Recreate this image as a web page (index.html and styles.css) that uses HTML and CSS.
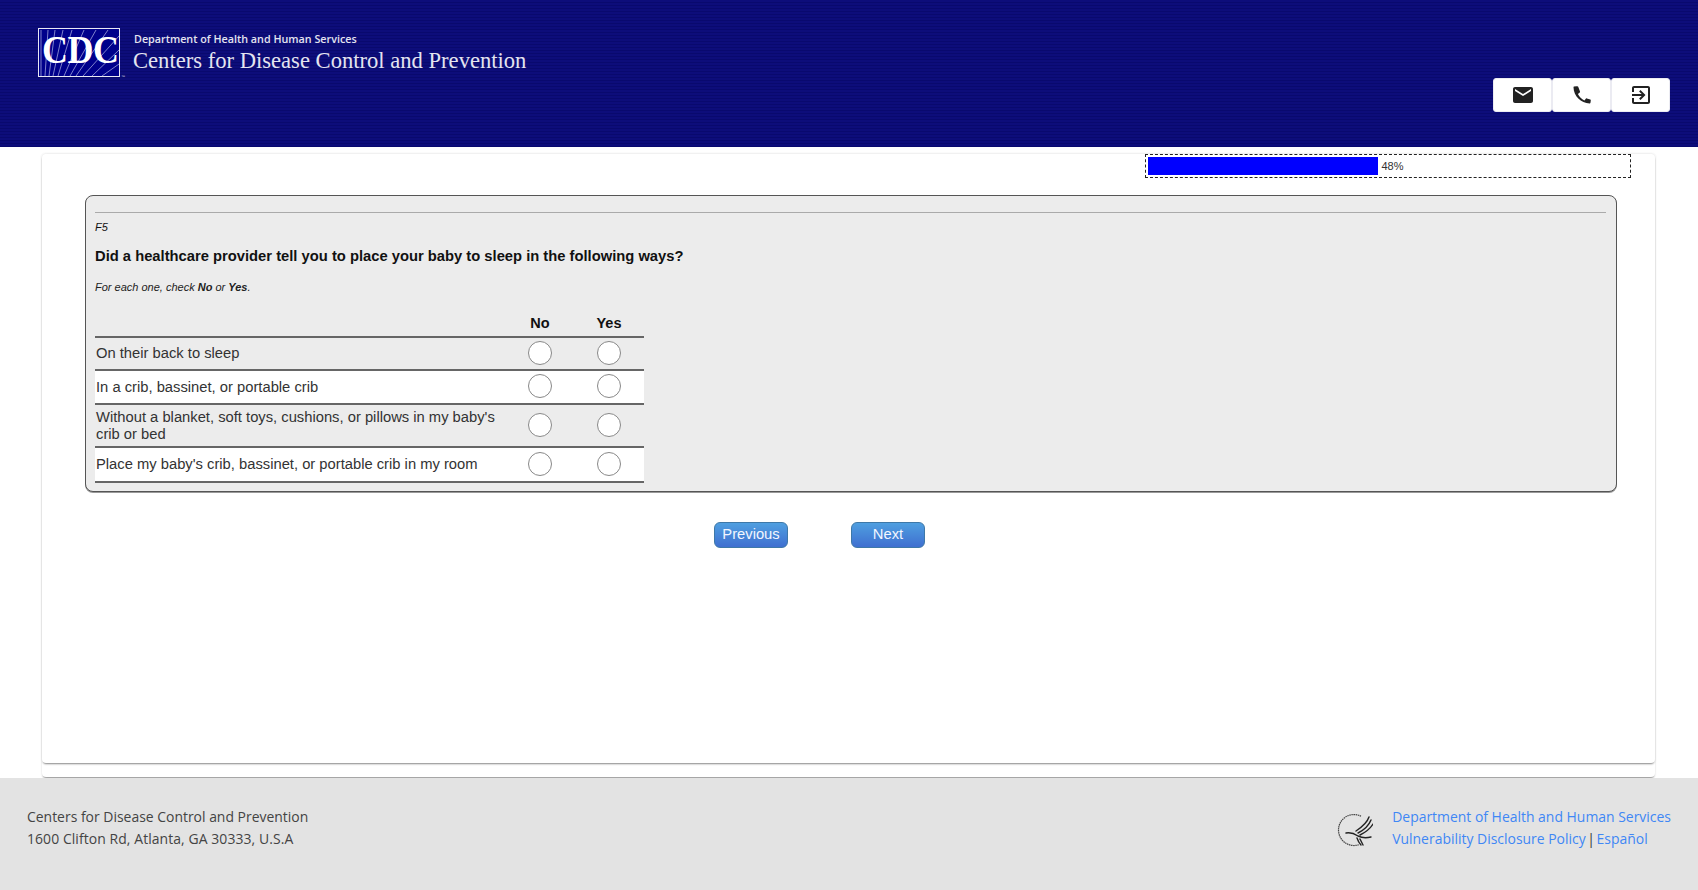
FILE: index.html
```html
<!DOCTYPE html>
<html lang="en">
<head>
<meta charset="utf-8">
<title>CDC Survey</title>
<link rel="stylesheet" href="styles.css">
</head>
<body>
<header class="site-header">
  <div class="brand">
    <svg class="logo" viewBox="0 0 88 54" width="88" height="54" aria-hidden="true">
      <rect x="0.5" y="0.5" width="81" height="48" fill="#00008b" stroke="#e8e8f4"/>
      <g stroke="#b4b8e6" stroke-width="0.7" fill="none">
        <path d="M3 48L3 2M7 48L10 2M11 48L17 2M15 48L25 2M20 48L34 2M26 48L46 2M32 48L58 2M38 48L70 2M45 48L81 8M54 48L81 22M64 48L81 36"/>
      </g>
      <text class="logo-text" transform="translate(4 35) scale(1 1.140)">CDC</text>
      <text class="logo-tm" x="83" y="50">™</text>
    </svg>
    <div class="brand-text">
      <div class="brand-dept">Department of Health and Human Services</div>
      <div class="brand-name">Centers for Disease Control and Prevention</div>
    </div>
  </div>
  <div class="header-actions">
    <button class="icon-btn" type="button" aria-label="Email">
      <svg viewBox="0 0 24 24" width="24" height="24"><path fill="#222" d="M20 4H4c-1.100 0-2 .9-2 2v12c0 1.100.9 2 2 2h16c1.100 0 2-.9 2-2V6c0-1.100-.9-2-2-2zm0 4-8 5-8-5V6l8 5 8-5v2z"/></svg>
    </button>
    <button class="icon-btn" type="button" aria-label="Phone">
      <svg viewBox="0 0 24 24" width="24" height="24"><path fill="#222" d="M6.600 3.200 4 3.600C3.700 3.700 3.500 4 3.500 4.300c.2 8.900 7.300 16 16.200 16.200.3 0 .6-.2.7-.5l.4-2.600c0-.4-.2-.7-.5-.8l-3.500-1.200c-.3-.1-.6 0-.8.2l-1.600 1.900c-2.800-1.400-5.100-3.700-6.500-6.500l1.900-1.600c.2-.2.3-.5.2-.8L8.200 3.700c-.2-.3-.5-.5-.8-.5z"/></svg>
    </button>
    <button class="icon-btn" type="button" aria-label="Log out">
      <svg viewBox="0 0 24 24" width="24" height="24"><path fill="#222" d="M5 3c-1.100 0-2 .9-2 2v4h2V5h14v14H5v-4H3v4c0 1.100.9 2 2 2h14c1.100 0 2-.9 2-2V5c0-1.100-.9-2-2-2H5zm5.100 12.600 1.400 1.400 5-5-5-5-1.400 1.400 2.600 2.600H3v2h9.700l-2.600 2.600z"/></svg>
    </button>
  </div>
</header>

<main class="page">
  <div class="card-back">
    <section class="card">
      <div class="progress-row">
        <div class="progress">
          <div class="progress-fill" style="width:48%"></div>
          <span class="progress-label">48%</span>
        </div>
      </div>
      <div class="panel">
        <hr class="panel-rule">
        <p class="qid">F5</p>
        <h1 class="question">Did a healthcare provider tell you to place your baby to sleep in the following ways?</h1>
        <p class="hint">For each one, check <b>No</b> or <b>Yes</b>.</p>
        <table class="grid">
          <thead>
            <tr><th class="col-label"></th><th class="col-no">No</th><th class="col-yes">Yes</th></tr>
          </thead>
          <tbody>
            <tr class="r1"><td>On their back to sleep</td><td><span class="radio"></span></td><td><span class="radio"></span></td></tr>
            <tr class="r2 alt"><td>In a crib, bassinet, or portable crib</td><td><span class="radio"></span></td><td><span class="radio"></span></td></tr>
            <tr class="r3"><td>Without a blanket, soft toys, cushions, or pillows in my baby's crib or bed</td><td><span class="radio"></span></td><td><span class="radio"></span></td></tr>
            <tr class="r4 alt"><td>Place my baby's crib, bassinet, or portable crib in my room</td><td><span class="radio"></span></td><td><span class="radio"></span></td></tr>
          </tbody>
        </table>
      </div>
      <div class="nav-buttons">
        <button class="nav-btn" type="button">Previous</button>
        <button class="nav-btn" type="button">Next</button>
      </div>
    </section>
  </div>
</main>

<footer class="site-footer">
  <div class="foot-left">
    <div>Centers for Disease Control and Prevention</div>
    <div class="foot-address">1600 Clifton Rd, Atlanta, GA 30333, U.S.A</div>
  </div>
  <div class="foot-right">
    <svg class="seal" viewBox="0 0 36 36" width="36" height="36" aria-hidden="true">
      <path d="M24 4.200A15.500 15.500 0 1 0 22 32.700" fill="none" stroke="#444" stroke-width="1.200" stroke-dasharray="1.500 0.600"/>
      <g fill="none" stroke="#222" stroke-width="1.400" stroke-linecap="round">
        <path d="M32 5C30 11 25 15 19 19"/>
        <path d="M34 8C32 13 27 18 21 21"/>
        <path d="M36 12C33 17 29 20 23 23"/>
        <path d="M9 21C14 20 18 22 21 24C25 26 30 26 34 25"/>
        <path d="M20 26C21 29 22 31 24 33"/>
        <path d="M23 27L26 33"/>
      </g>
    </svg>
    <div class="foot-links">
      <div><a href="#">Department of Health and Human Services</a></div>
      <div><a href="#">Vulnerability Disclosure Policy</a><span class="sep"> | </span><a href="#">Español</a></div>
    </div>
  </div>
</footer>
</body>
</html>
```
FILE: styles.css
```css
* { box-sizing: border-box; }
html, body { margin: 0; height: 100%; }
body {
  display: flex;
  flex-direction: column;
  height: 890px;
  overflow: hidden;
  background: #fff;
  font-family: "Liberation Sans", Arial, sans-serif;
  color: #222;
}

.site-header {
  flex: 0 0 147px;
  display: flex;
  justify-content: space-between;
  align-items: flex-start;
  padding: 28px 28px 0 38px;
  background: repeating-linear-gradient(to bottom, #0d0d7a 0, #0d0d7a 2px, #09096e 2px, #09096e 3px);
}
.brand { display: flex; align-items: flex-start; }
.logo { flex: none; display: block; }
.logo-text { font-family: "Liberation Serif", serif; font-weight: 700; font-size: 36px; fill: #fff; letter-spacing: -0.500px; }
.logo-tm { font-size: 4px; fill: #ccd; }
.brand-text { margin-left: 7px; color: #e4e4f0; padding-top: 3px; }
.brand-dept { font-family: "Open Sans", sans-serif; font-size: 10.750px; font-weight: 600; line-height: 17px; padding-left: 1px; }
.brand-name { font-family: "Liberation Serif", serif; font-size: 22.600px; line-height: 26px; }

.header-actions { display: flex; margin-top: 50px; }
.icon-btn {
  width: 59px; height: 34px;
  padding: 0;
  display: flex; align-items: center; justify-content: center;
  background: #fff;
  border: 1px solid #ebebf2;
  border-radius: 3px;
}

.page { flex: 1 1 auto; padding: 7px 43px 0 42px; }
.card-back {
  height: 623px;
  background: #fff;
  border-radius: 4px;
  box-shadow: 0 2px 2px -1px rgba(0,0,0,.45), 0 0 3px rgba(0,0,0,.08);
}
.card {
  height: 609px;
  padding: 0 38px 0 43px;
  border-radius: 4px;
  box-shadow: 0 2px 2px -1px rgba(0,0,0,.45), 0 0 3px rgba(0,0,0,.08);
}
.progress-row { display: flex; justify-content: flex-end; margin-right: -14px; }
.progress {
  width: 486px; height: 24px;
  padding: 2px;
  display: flex; align-items: center;
  border: 1px dashed #222;
}
.progress-fill { height: 18px; background: #0000ff; }
.progress-label { font-size: 11px; margin-left: 3px; color: #333; }

.panel {
  height: 297px;
  margin-top: 17px;
  padding: 16px 10px 0 9px;
  background: #ececec;
  border: 1px solid #555;
  border-radius: 8px;
  box-shadow: 0 1px 0 #999;
}
.panel-rule { margin: 0; border: 0; border-top: 1px solid #aaa; }
.qid { margin: 7px 0 0; font-size: 11px; line-height: 15px; font-style: italic; color: #111; }
.question { margin: 11px 0 0; font-size: 14.750px; line-height: 20px; font-weight: 700; color: #111; }
.hint { margin: 14px 0 0; font-size: 11px; line-height: 14px; font-style: italic; color: #222; }
.grid { margin-top: 18px; width: 549px; border-collapse: collapse; table-layout: fixed; font-size: 14.750px; }
.grid th { height: 25px; font-size: 14.500px; padding: 0 0 2px; color: #111; vertical-align: middle; }
.col-label { width: 411px; }
.col-no { width: 68px; }
.col-yes { width: 70px; }
.grid td { padding: 0 0 0 1px; border-top: 2px solid #666; line-height: 17px; color: #333; }
.grid td + td { padding: 0; text-align: left; }
.grid tbody tr:last-child td { border-bottom: 2px solid #666; }
.r1 td { height: 33px; }
.r2 td { height: 34px; }
.r3 td { height: 43px; }
.r4 td { height: 35px; }
.alt td { background: #fff; }
.radio {
  display: block;
  width: 24px; height: 24px;
  margin: -2px auto 0;
  background: #fff;
  border: 1px solid #888;
  border-radius: 50%;
}

.nav-buttons { display: flex; justify-content: center; gap: 63px; margin-top: 30px; padding-right: 63px; }
.nav-btn {
  width: 74px; height: 26px;
  padding: 0 0 2px;
  font-family: "Liberation Sans", Arial, sans-serif;
  font-size: 14.750px;
  color: #f2f6ff;
  background: linear-gradient(to bottom, #4f9fe0, #3f6fd0);
  border: 1px solid #3e78a8;
  border-radius: 6px;
}

.site-footer {
  flex: 0 0 112px;
  display: flex;
  justify-content: space-between;
  padding: 28px 27px 0 27px;
  background: #e3e3e3;
  font-family: "Open Sans", sans-serif;
  font-size: 13.950px;
  line-height: 22px;
  color: #444;
}
.foot-address { letter-spacing: .08px; }
.foot-right { display: flex; align-items: flex-start; }
.seal { margin: 6px 19px 0 0; }
.foot-links a { color: #3f87f5; text-decoration: none; }
.sep { margin: 0 -2px; color: #333; }
```
